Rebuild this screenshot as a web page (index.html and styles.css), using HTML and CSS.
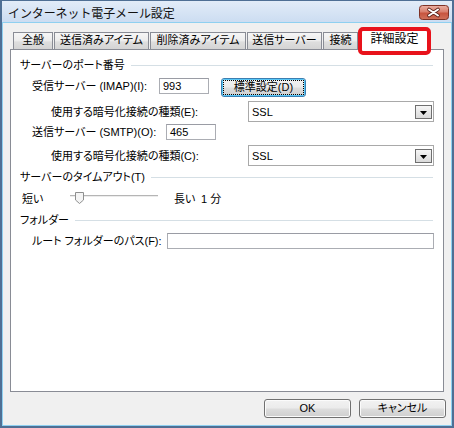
FILE: index.html
```html
<!DOCTYPE html>
<html lang="ja">
<head>
<meta charset="utf-8">
<title>インターネット電子メール設定</title>
<link rel="stylesheet" href="styles.css">
</head>
<body>
<div class="window">
  <div class="titlebar">
    <span class="title">インターネット電子メール設定</span>
    <div class="close">
      <svg width="30" height="15" viewBox="0 0 30 15">
        <defs>
          <linearGradient id="cg" x1="0" y1="0" x2="0" y2="1">
            <stop offset="0" stop-color="#eab0a4"/>
            <stop offset="0.45" stop-color="#d9806e"/>
            <stop offset="0.55" stop-color="#c8553f"/>
            <stop offset="1" stop-color="#d0715a"/>
          </linearGradient>
        </defs>
        <rect x="0.5" y="0.5" width="29" height="14" rx="3" fill="url(#cg)" stroke="#7e3226"/>
        <path d="M10 4.5 L19 10.5 M19 4.5 L10 10.5" stroke="#5a2018" stroke-width="3.6" stroke-linecap="round"/>
        <path d="M10 4.5 L19 10.5 M19 4.5 L10 10.5" stroke="#ffffff" stroke-width="2" stroke-linecap="round"/>
      </svg>
    </div>
  </div>
  <div class="client">
    <div class="tabs">
      <div class="tab t1">全般</div>
      <div class="tab t2">送信済みアイテム</div>
      <div class="tab t3">削除済みアイテム</div>
      <div class="tab t4">送信サーバー</div>
      <div class="tab t5">接続</div>
      <div class="tab selected t6">詳細設定<span class="highlight"></span></div>
    </div>
    <div class="panel">
      <div class="group-head gh1"><span>サーバーのポート番号</span><i class="rule"></i></div>
      <div class="row row-imap">
        <span class="lbl lbl-imap">受信サーバー (IMAP)(I):</span>
        <div class="textbox tb-port">993</div>
        <div class="btn btn-default"><span class="focus">標準設定(D)</span></div>
      </div>
      <div class="row row-enc">
        <span class="lbl lbl-enc">使用する暗号化接続の種類(E):</span>
        <div class="combo"><span class="val">SSL</span><span class="arrow"><svg width="7" height="4" viewBox="0 0 7 4"><path d="M0 0 H7 L3.5 4 Z" fill="#000"/></svg></span></div>
      </div>
      <div class="row row-smtp">
        <span class="lbl lbl-smtp">送信サーバー (SMTP)(O):</span>
        <div class="textbox tb-port">465</div>
      </div>
      <div class="row row-enc row-enc2">
        <span class="lbl lbl-enc">使用する暗号化接続の種類(C):</span>
        <div class="combo"><span class="val">SSL</span><span class="arrow"><svg width="7" height="4" viewBox="0 0 7 4"><path d="M0 0 H7 L3.5 4 Z" fill="#000"/></svg></span></div>
      </div>
      <div class="group-head gh2"><span>サーバーのタイムアウト(T)</span><i class="rule"></i></div>
      <div class="row row-slider">
        <span class="lbl lbl-short">短い</span>
        <div class="slider">
          <span class="track"></span>
          <svg class="thumb" width="9" height="12" viewBox="0 0 9 12"><path d="M0.5 0.5 H8.5 V8 L4.5 11.5 L0.5 8 Z" fill="#f4f4f4" stroke="#8e8f8f"/></svg>
        </div>
        <span class="lbl lbl-long">長い</span>
        <span class="lbl">1 分</span>
      </div>
      <div class="group-head gh3"><span>フォルダー</span><i class="rule"></i></div>
      <div class="row row-root">
        <span class="lbl lbl-root">ルート フォルダーのパス(F):</span>
        <div class="textbox tb-root"></div>
      </div>
    </div>
    <div class="buttons">
      <div class="btn btn-bottom">OK</div>
      <div class="btn btn-bottom">キャンセル</div>
    </div>
  </div>
</div>
</body>
</html>
```

FILE: styles.css
```css
html, body {
  margin: 0;
  padding: 0;
  background: #ffffff;
}

body {
  font-family: "Liberation Sans", "Noto Sans CJK JP", sans-serif;
  font-size: 11px;
  color: #000;
  font-feature-settings: "palt" 1;
}

.window {
  width: 454px;
  height: 428px;
  box-sizing: border-box;
  border-style: solid;
  border-color: #4f6f94;
  border-width: 1px 2px 2px 2px;
  background: #c8daf0;
  display: flex;
  flex-direction: column;
  overflow: hidden;
}

.titlebar {
  height: 22px;
  display: flex;
  align-items: flex-start;
  background: linear-gradient(#e2ecf8, #cbdcf1);
  margin: 0 -1px;
  padding-left: 7px;
}

.title {
  margin-top: 5px;
  font-family: "Noto Sans CJK JP", sans-serif;
  font-size: 12px;
  line-height: 14px;
  font-feature-settings: normal;
  letter-spacing: -0.1px;
  color: #111;
}

.close {
  margin-left: auto;
  margin-right: 4px;
  margin-top: 4px;
  width: 30px;
  height: 15px;
}

.close svg {
  display: block;
}

.client {
  flex: 1;
  margin: 0 1px 1px 1px;
  background: #f0f0f0;
  display: flex;
  flex-direction: column;
  box-shadow: 0 0 0 1px #8fd0f0;
}

/* tabs */
.tabs {
  display: flex;
  align-items: flex-end;
  height: 20px;
  margin-top: 6px;
  padding-left: 10px;
}

.tab {
  box-sizing: border-box;
  height: 17px;
  border: 1px solid #898c95;
  border-bottom: none;
  margin-right: 1px;
  background: linear-gradient(#f6f6f6 0%, #ececec 50%, #dedede 55%, #d4d4d4 100%);
  text-align: center;
  line-height: 15px;
  white-space: nowrap;
}

.t1 { width: 40px; }
.t2 { width: 95px; }
.t3 { width: 96px; }
.t4 { width: 75px; }
.t5 { width: 35px; margin-right: 3px; }

.tab.selected {
  width: 67px;
  height: 21px;
  margin-bottom: -1px;
  background: #ffffff;
  line-height: 19px;
  font-size: 12px;
  position: relative;
  z-index: 2;
}

.highlight {
  position: absolute;
  left: -4px;
  top: -3px;
  width: 73px;
  height: 28px;
  box-sizing: border-box;
  border: 4px solid #e8121b;
  border-radius: 5px;
}

/* panel */
.panel {
  box-sizing: border-box;
  height: 343px;
  margin: 0 7px 0 7px;
  border: 1px solid #898c95;
  background: #ffffff;
  display: flex;
  flex-direction: column;
}

.group-head {
  display: flex;
  align-items: center;
  height: 14px;
  line-height: 14px;
  padding-left: 9px;
  margin-right: 10px;
  white-space: nowrap;
}

.group-head .rule {
  flex: 1;
  height: 1px;
  background: #d5dfe5;
  margin-left: 6px;
}

.gh1 { margin-top: 8px; }
.gh2 { margin-top: 4px; }
.gh3 { margin-top: 5px; }

.row {
  display: flex;
  white-space: nowrap;
}

.lbl {
  line-height: 16px;
  flex: none;
}

.row-imap {
  margin-top: 6px;
  height: 19px;
  align-items: flex-start;
  padding-left: 21px;
}

.lbl-imap { width: 127px; }
.lbl-smtp { width: 134px; }

.textbox {
  box-sizing: border-box;
  height: 16px;
  border: 1px solid #abadb3;
  border-top-color: #9a9ca4;
  background: #fff;
  padding-left: 3px;
  line-height: 14px;
  flex: none;
}

.tb-port { width: 50px; }
.tb-root { width: 267px; }

.btn {
  box-sizing: border-box;
  height: 19px;
  border: 1px solid #707070;
  border-radius: 3px;
  background: linear-gradient(#f2f2f2 0%, #ebebeb 48%, #dddddd 52%, #cfcfcf 100%);
  box-shadow: inset 0 0 0 1px #fbfbfb;
  text-align: center;
  line-height: 17px;
  flex: none;
}

.btn-default {
  width: 85px;
  margin-left: 12px;
  border-color: #3c7fb1;
  box-shadow: inset 0 0 0 1px #58c8f8;
  padding: 2px;
  line-height: 13px;
}

.btn-default .focus {
  display: block;
  outline: 1px dotted #000;
  height: 13px;
}

.row-enc {
  margin-top: 4px;
  height: 21px;
  align-items: center;
  padding-left: 40px;
}

.row-enc2 { margin-top: 5px; }

.lbl-enc { width: 197px; }

.combo {
  box-sizing: border-box;
  width: 186px;
  height: 21px;
  border: 1px solid #a9a9a9;
  background: #fff;
  display: flex;
  align-items: center;
  padding-left: 3px;
  flex: none;
}

.combo .val {
  flex: 1;
  line-height: 16px;
}

.arrow {
  box-sizing: border-box;
  width: 17px;
  height: 14px;
  margin-right: 1px;
  border: 1px solid #6f6f6f;
  background: linear-gradient(#f6f6f6, #dadada);
  display: flex;
  align-items: center;
  justify-content: center;
  padding-top: 2px;
}

.arrow svg { display: block; }

.row-smtp {
  margin-top: 2px;
  height: 16px;
  align-items: flex-start;
  padding-left: 21px;
}

.row-slider {
  margin-top: 6px;
  height: 18px;
  align-items: center;
  padding-left: 11px;
}

.lbl-short { width: 48px; }

.slider {
  width: 88px;
  height: 18px;
  position: relative;
  flex: none;
}

.track {
  position: absolute;
  left: 0;
  right: 0;
  top: 5px;
  height: 1px;
  background: #b5b5b5;
  border-bottom: 1px solid #ececec;
}

.thumb {
  position: absolute;
  left: 5px;
  top: 2px;
}

.lbl-long {
  margin-left: 16px;
  width: 27px;
}

.row-root {
  margin-top: 6px;
  height: 16px;
  align-items: flex-start;
  padding-left: 21px;
}

.lbl-root { width: 135px; }

/* bottom buttons */
.buttons {
  display: flex;
  justify-content: flex-end;
  gap: 8px;
  margin-top: 7px;
  padding-right: 5px;
}

.btn-bottom { width: 87px; }
```
